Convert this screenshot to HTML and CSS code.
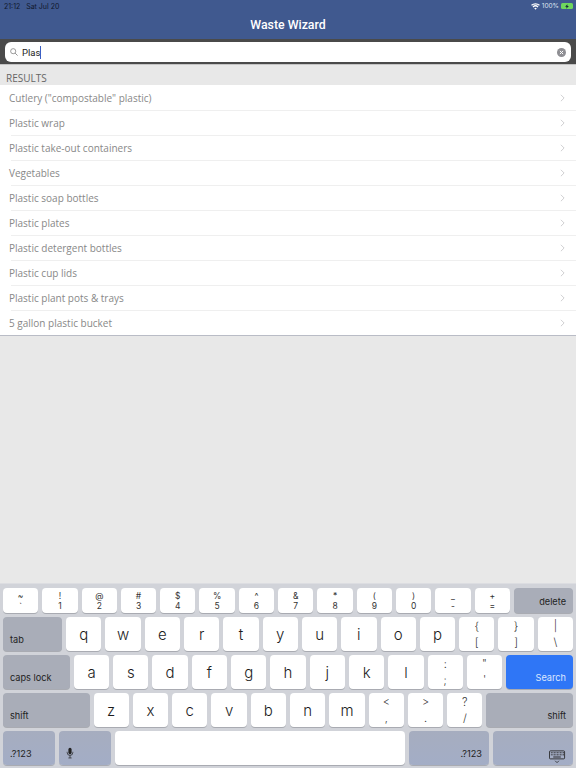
FILE: index.html
```html
<!DOCTYPE html>
<html lang="en">
<head>
  <meta charset="UTF-8" />
  <title>Waste Wizard</title>
  <link rel="stylesheet" href="styles.css">
</head>
<body>
  <div class="app">
    <header class="nav">
      <div class="status">
        <span>21:12&nbsp;&nbsp;&nbsp;Sat Jul 20</span>
        <span class="status-right">
          <svg class="wifi" viewBox="0 0 10 8" width="9" height="7"><path d="M5 7.8 3.5 6a2.3 2.3 0 0 1 3 0zM2.6 5 1.6 3.9a5 5 0 0 1 6.8 0L7.4 5a3.6 3.6 0 0 0-4.8 0zM.9 3.2 0 2.1a7.4 7.4 0 0 1 10 0L9.100 3.200a6 6 0 0 0-8.200 0z" fill="#fff"/></svg>
          <span>100%</span>
          <span class="battery"><svg viewBox="0 0 8 6" width="6" height="5"><path d="M4.500 0 1.500 3.400h2L3 6l3.500-3.800h-2z" fill="#123"/></svg></span>
        </span>
      </div>
      <h1 class="title">Waste Wizard</h1>
    </header>

    <div class="searchbar">
      <div class="field">
        <svg class="search-icon" viewBox="0 0 10 10" width="8" height="8"><circle cx="4" cy="4" r="3.200" fill="none" stroke="#777" stroke-width="0.9"/><path d="M6.400 6.400 9.500 9.500" stroke="#777" stroke-width="1"/></svg>
        <span class="query">Plas</span><span class="caret"></span>
        <svg class="clear" viewBox="0 0 10 10" width="9" height="9"><circle cx="5" cy="5" r="5" fill="#8e8e93"/><path d="M3.200 3.200 6.800 6.800M6.800 3.200 3.200 6.800" stroke="#fff" stroke-width="1.100"/></svg>
      </div>
    </div>

    <main class="content">
      <div class="section-head">RESULTS</div>
      <ul class="results">
        <li><span>Cutlery ("compostable" plastic)</span><svg class="chev" viewBox="0 0 6 10" width="5" height="8"><path d="M1 1 5 5 1 9" fill="none" stroke="#c4c4c7" stroke-width="1"/></svg></li>
        <li><span>Plastic wrap</span><svg class="chev" viewBox="0 0 6 10" width="5" height="8"><path d="M1 1 5 5 1 9" fill="none" stroke="#c4c4c7" stroke-width="1"/></svg></li>
        <li><span>Plastic take-out containers</span><svg class="chev" viewBox="0 0 6 10" width="5" height="8"><path d="M1 1 5 5 1 9" fill="none" stroke="#c4c4c7" stroke-width="1"/></svg></li>
        <li><span>Vegetables</span><svg class="chev" viewBox="0 0 6 10" width="5" height="8"><path d="M1 1 5 5 1 9" fill="none" stroke="#c4c4c7" stroke-width="1"/></svg></li>
        <li><span>Plastic soap bottles</span><svg class="chev" viewBox="0 0 6 10" width="5" height="8"><path d="M1 1 5 5 1 9" fill="none" stroke="#c4c4c7" stroke-width="1"/></svg></li>
        <li><span>Plastic plates</span><svg class="chev" viewBox="0 0 6 10" width="5" height="8"><path d="M1 1 5 5 1 9" fill="none" stroke="#c4c4c7" stroke-width="1"/></svg></li>
        <li><span>Plastic detergent bottles</span><svg class="chev" viewBox="0 0 6 10" width="5" height="8"><path d="M1 1 5 5 1 9" fill="none" stroke="#c4c4c7" stroke-width="1"/></svg></li>
        <li><span>Plastic cup lids</span><svg class="chev" viewBox="0 0 6 10" width="5" height="8"><path d="M1 1 5 5 1 9" fill="none" stroke="#c4c4c7" stroke-width="1"/></svg></li>
        <li><span>Plastic plant pots &amp; trays</span><svg class="chev" viewBox="0 0 6 10" width="5" height="8"><path d="M1 1 5 5 1 9" fill="none" stroke="#c4c4c7" stroke-width="1"/></svg></li>
        <li><span>5 gallon plastic bucket</span><svg class="chev" viewBox="0 0 6 10" width="5" height="8"><path d="M1 1 5 5 1 9" fill="none" stroke="#c4c4c7" stroke-width="1"/></svg></li>
      </ul>
    </main>

    <section class="keyboard">
      <div class="row row-num">
        <div class="key num"><span>~</span><span>`</span></div>
        <div class="key num"><span>!</span><span>1</span></div>
        <div class="key num"><span>@</span><span>2</span></div>
        <div class="key num"><span>#</span><span>3</span></div>
        <div class="key num"><span>$</span><span>4</span></div>
        <div class="key num"><span>%</span><span>5</span></div>
        <div class="key num"><span>^</span><span>6</span></div>
        <div class="key num"><span>&amp;</span><span>7</span></div>
        <div class="key num"><span>*</span><span>8</span></div>
        <div class="key num"><span>(</span><span>9</span></div>
        <div class="key num"><span>)</span><span>0</span></div>
        <div class="key num"><span>_</span><span>-</span></div>
        <div class="key num"><span>+</span><span>=</span></div>
        <div class="key mod right">delete</div>
      </div>
      <div class="row">
        <div class="key mod">tab</div>
        <div class="key">q</div><div class="key">w</div><div class="key">e</div><div class="key">r</div><div class="key">t</div><div class="key">y</div><div class="key">u</div><div class="key">i</div><div class="key">o</div><div class="key">p</div>
        <div class="key dbl"><span>{</span><span>[</span></div>
        <div class="key dbl"><span>}</span><span>]</span></div>
        <div class="key dbl"><span>|</span><span>\</span></div>
      </div>
      <div class="row">
        <div class="key mod">caps lock</div>
        <div class="key">a</div><div class="key">s</div><div class="key">d</div><div class="key">f</div><div class="key">g</div><div class="key">h</div><div class="key">j</div><div class="key">k</div><div class="key">l</div>
        <div class="key dbl"><span>:</span><span>;</span></div>
        <div class="key dbl"><span>"</span><span>'</span></div>
        <div class="key mod right search-key">Search</div>
      </div>
      <div class="row">
        <div class="key mod">shift</div>
        <div class="key">z</div><div class="key">x</div><div class="key">c</div><div class="key">v</div><div class="key">b</div><div class="key">n</div><div class="key">m</div>
        <div class="key dbl"><span>&lt;</span><span>,</span></div>
        <div class="key dbl"><span>&gt;</span><span>.</span></div>
        <div class="key dbl"><span>?</span><span>/</span></div>
        <div class="key mod right">shift</div>
      </div>
      <div class="row row-bottom">
        <div class="key mod blue w-num">.?123</div>
        <div class="key mod blue w-num mic">
          <svg viewBox="0 0 10 14" width="8" height="12"><rect x="3" y="0.500" width="4" height="8" rx="2" fill="#222"/><path d="M1.500 5.500v1a3.500 3.500 0 0 0 7 0v-1M5 10v3M3 13.200h4" fill="none" stroke="#222" stroke-width="0.900"/></svg>
        </div>
        <div class="key space"></div>
        <div class="key mod blue right w-wide">.?123</div>
        <div class="key mod blue w-wide hide-kb">
          <svg viewBox="0 0 18 14" width="17" height="14"><rect x="0.500" y="0.500" width="16" height="8.500" rx="1" fill="none" stroke="#222" stroke-width="0.900"/><path d="M2 2.500h14M2 4.700h14" stroke="#222" stroke-width="1" stroke-dasharray="1 .6"/><path d="M4.500 7h8" stroke="#222" stroke-width="1"/><path d="M6.500 11 8.500 13 10.500 11" fill="none" stroke="#222" stroke-width="0.800"/></svg>
        </div>
      </div>
    </section>
  </div>
</body>
</html>
```

FILE: styles.css
```css
* {
  box-sizing: border-box;
}
body {
  margin: 0;
  font-family: "Inter", "Liberation Sans", sans-serif;
  background: #e8e8e8;
}
.app {
  display: flex;
  flex-direction: column;
  width: 576px;
  height: 768px;
  overflow: hidden;
}

.nav {
  height: 39px;
  background: #40598f;
  color: #fff;
  flex: none;
}
.status {
  display: flex;
  justify-content: space-between;
  align-items: center;
  height: 12px;
  padding: 0 3px 0 4px;
  font-size: 7px;
  color: #10182c;
}
.status-right {
  display: flex;
  align-items: center;
  gap: 2px;
  font-size: 6.5px;
  color: #dfe5f0;
}
.battery {
  display: flex;
  align-items: center;
  justify-content: center;
  width: 12px;
  height: 6px;
  background: #6fd65e;
  border-radius: 1.500px;
}
.title {
  margin: 0;
  padding-top: 5px;
  font-family: "Roboto", sans-serif;
  font-size: 12.300px;
  font-weight: 500;
  line-height: 16px;
  text-align: center;
}

.searchbar {
  flex: none;
  height: 26px;
  padding: 3px 5px;
  background: #4a4a4a;
  border-bottom: 1px solid #c4c4c4;
}
.field {
  display: flex;
  align-items: center;
  height: 20px;
  padding: 0 5px;
  background: #fff;
  border-radius: 6px;
}
.search-icon {
  margin-right: 4px;
}
.query {
  font-family: "Roboto", sans-serif;
  font-size: 9.500px;
  color: #222;
}
.caret {
  width: 1px;
  height: 13px;
  background: #3b5fc4;
}
.clear {
  margin-left: auto;
}

.content {
  flex: 1;
  background: #e8e8e8;
}
.section-head {
  height: 20px;
  padding: 7px 0 0 6px;
  font-family: "Open Sans", sans-serif;
  font-size: 10px;
  line-height: 13px;
  color: #666;
}
.results {
  margin: 0;
  padding: 0;
  list-style: none;
  background: #fff;
  border-bottom: 1px solid #b9bcc6;
}
.results li {
  display: flex;
  justify-content: space-between;
  align-items: center;
  height: 25px;
  padding: 0 11px 0 9px;
  font-family: "Open Sans", sans-serif;
  font-size: 10px;
  color: #888;
  position: relative;
}
.results li + li::before {
  content: "";
  position: absolute;
  top: 0;
  left: 11px;
  right: 0;
  height: 1px;
  background: #efefef;
}

.keyboard {
  flex: none;
  height: 185px;
  padding: 4px 3px 3px;
  display: flex;
  flex-direction: column;
  gap: 4px;
  background: #d1d3d9;
  border-top: 1px solid #dcdde1;
}
.row {
  display: flex;
  gap: 4px;
  height: 34px;
}
.row-num {
  height: 25.500px;
}
.key {
  flex: 0 0 35.300px;
  display: flex;
  align-items: center;
  justify-content: center;
  background: #fff;
  border-radius: 4px;
  box-shadow: 0 1px 0 #a9abb2;
  font-size: 15px;
  font-weight: 300;
  color: #1c1c1c;
}
.num,
.dbl {
  flex-direction: column;
  font-size: 8.500px;
  font-weight: 400;
  line-height: 10px;
  color: #333;
}
.dbl {
  font-size: 11px;
  font-weight: 300;
  gap: 5px;
  line-height: 11px;
}
.mod {
  flex: 1 1 0;
  justify-content: flex-start;
  align-items: flex-end;
  padding: 0 7px 5px;
  background: #a9adb8;
  font-size: 9.200px;
  font-weight: 400;
  line-height: 12px;
  color: #222;
}
.mod.right {
  justify-content: flex-end;
}
.search-key {
  background: #2f76f6;
  color: #dbe7ff;
}
.blue {
  background: linear-gradient(#a6adbf, #a3adc6);
}
.w-num {
  flex: 0 0 52px;
}
.w-wide {
  flex: 0 0 80px;
}
.mic {
  padding: 0 0 6px 7px;
}
.hide-kb {
  justify-content: flex-end;
  padding: 0 7px 1px;
}
.space {
  flex: 0 0 290px;
}
```
